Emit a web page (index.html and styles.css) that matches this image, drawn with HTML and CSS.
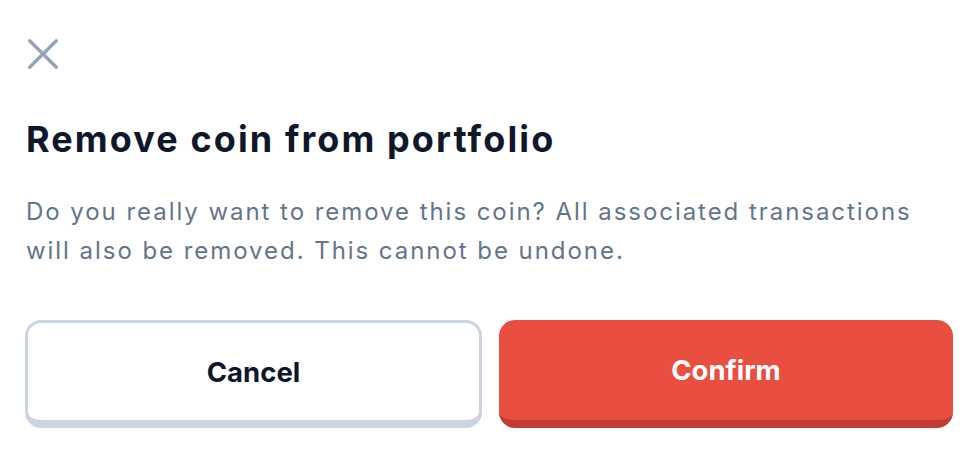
FILE: index.html
```html
<!DOCTYPE html>
<html>
<head>
    <meta charset="utf-8">
    <title>Remove coin</title>
    <link rel="stylesheet" href="styles.css">
</head>
<body>
    <div class="dialog">
        <button class="close" type="button" aria-label="Close">
            <svg width="32" height="32" viewBox="0 0 32 32" fill="none" stroke="currentColor" stroke-width="3.4" stroke-linecap="round">
                <path d="M2.7 2.7 L29.3 29.3 M29.3 2.7 L2.7 29.3"/>
            </svg>
        </button>
        <h2 class="title">Remove coin from portfolio</h2>
        <p class="message">Do you really want to remove this coin? All associated transactions will also be removed. This cannot be undone.</p>
        <div class="actions">
            <button class="btn btn-cancel" type="button">Cancel</button>
            <button class="btn btn-confirm" type="button">Confirm</button>
        </div>
    </div>
</body>
</html>
```

FILE: styles.css
```css
body {
    margin: 0;
    padding: 0;
    background: #ffffff;
    font-family: Inter, "Noto Sans", sans-serif;
    font-optical-sizing: none;
    font-variation-settings: "opsz" 14;
}
.dialog {
    padding: 38px 25px 0 25px;
}
.close {
    display: block;
    width: 32px;
    height: 32px;
    margin-left: 2px;
    padding: 0;
    border: none;
    background: none;
    color: #94a3b8;
    cursor: pointer;
}
.close svg {
    display: block;
}
.title {
    margin: 48px 0 0 1px;
    font-size: 36px;
    line-height: 1.2;
    font-weight: 700;
    color: #0f172a;
    letter-spacing: 2.1px;
}
.message {
    margin: 31px 0 0 1px;
    font-size: 24px;
    line-height: 39px;
    color: #64748b;
    letter-spacing: 1.95px;
}
.actions {
    display: grid;
    grid-template-columns: 457px 1fr;
    gap: 17px;
    margin-top: 50px;
}
.btn {
    height: 108px;
    border-radius: 16px;
    font-family: inherit;
    font-size: 27.5px;
    font-weight: 700;
    cursor: pointer;
}
.btn-cancel {
    background: #ffffff;
    color: #0f172a;
    border: 3px solid #cbd5e1;
    border-bottom-width: 8px;
}
.btn-confirm {
    background: #e84f40;
    color: #ffffff;
    border: none;
    border-bottom: 8px solid #c43a37;
}
```
